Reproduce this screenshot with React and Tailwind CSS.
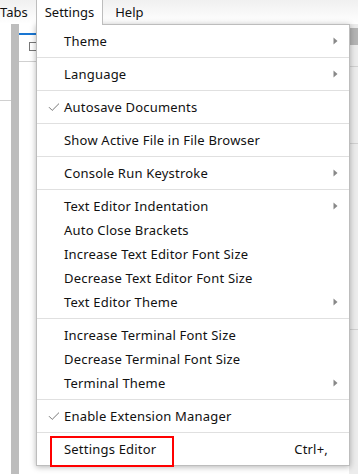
const groups = [
  [{ label: "Theme", sub: true }],
  [{ label: "Language", sub: true }],
  [{ label: "Autosave Documents", checked: true }],
  [{ label: "Show Active File in File Browser" }],
  [{ label: "Console Run Keystroke", sub: true }],
  [
    { label: "Text Editor Indentation", sub: true },
    { label: "Auto Close Brackets" },
    { label: "Increase Text Editor Font Size" },
    { label: "Decrease Text Editor Font Size" },
    { label: "Text Editor Theme", sub: true },
  ],
  [
    { label: "Increase Terminal Font Size" },
    { label: "Decrease Terminal Font Size" },
    { label: "Terminal Theme", sub: true },
  ],
  [{ label: "Enable Extension Manager", checked: true }],
  [{ label: "Settings Editor", shortcut: "Ctrl+,", boxed: true }],
];

function MenuItem({ item }) {
  return (
    <div className="relative flex h-6 items-center">
      <div className="flex w-[27px] items-center justify-end">
        {item.checked && (
          <svg width="12" height="10" viewBox="0 0 12 10" className="mr-[4px]">
            <path d="M1 5.2 L4.2 8.4 L11 1.6" fill="none" stroke="#777" strokeWidth="1" />
          </svg>
        )}
      </div>
      <span className="flex-1 pt-[2px] tracking-[0.2px]">{item.label}</span>
      {item.shortcut && <span className="pr-[21px] pt-[2px] tracking-[0.2px]">{item.shortcut}</span>}
      {item.sub && (
        <svg width="5" height="8" viewBox="0 0 5 8" className="mr-[11px]">
          <path d="M0.5 0.5 L4.5 4 L0.5 7.5 Z" fill="#888" />
        </svg>
      )}
      {item.boxed && (
        <div className="absolute left-[13px] top-[-1px] h-[31px] w-[124px] border-2 border-[#ff0000]" />
      )}
    </div>
  );
}

export default function App() {
  return (
    <div
      className="relative h-[474px] w-[358px] overflow-hidden bg-white text-[13px] text-[#111]"
      style={{ fontFamily: '"Noto Sans", "Open Sans", sans-serif' }}
    >
      {/* menu bar */}
      <div className="flex h-6 items-center bg-gradient-to-b from-[#f0f0f0] to-white">
        <div className="-ml-2 flex h-6 items-center px-2 pt-[2px]">Tabs</div>
        <div className="z-20 flex h-[25px] items-center self-start border-x border-[#bdbdbd] bg-white px-2 pt-[1px]">
          Settings
        </div>
        <div className="flex h-6 items-center px-2 pl-3 pt-[2px]">Help</div>
      </div>

      {/* workspace behind the menu */}
      <div className="flex h-[450px]">
        <div className="w-[11px] bg-white">
          <div className="mt-[76px] border-t border-[#d0d0d0]" />
        </div>
        <div className="w-[8px] bg-[#bdbdbd]" />
        <div className="w-[17px] bg-white">
          <div className="mt-[9px] h-[2px] bg-[#1976d2]" />
          <div className="ml-[10px] mt-[7px] h-[9px] w-[9px] border border-[#777]" />
          <div className="mt-[10px] border-t border-[#d0d0d0]" />
        </div>
        <div className="flex-1 bg-white" />
        <div className="w-[9px] bg-[#ececec]">
          <div className="mt-[4px] h-[17px] bg-[#b4b4b4]" />
          <div className="mt-[21px] border-t border-[#d0d0d0]" />
          <div className="mt-[76px] border-t border-[#d0d0d0]" />
          <div className="mt-[185px] border-t border-[#d0d0d0]" />
        </div>
      </div>

      {/* Settings menu */}
      <div className="absolute left-[36px] top-[24px] z-10 w-[314px] border border-[#bdbdbd] bg-white shadow-[0_1px_6px_rgba(0,0,0,0.3)]">
        {groups.map((g, i) => (
          <div key={i} className={i > 0 ? "border-t border-[#e0e0e0] py-1" : "py-1"}>
            {g.map((item) => (
              <MenuItem key={item.label} item={item} />
            ))}
          </div>
        ))}
      </div>
    </div>
  );
}
